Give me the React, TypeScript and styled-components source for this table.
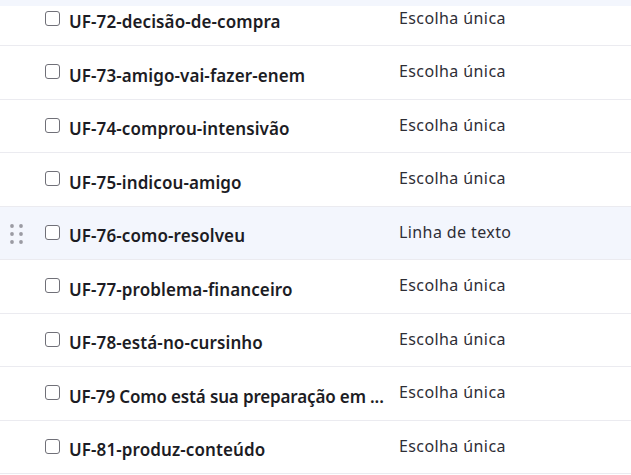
import React from "react";
import styled, { createGlobalStyle } from "styled-components";

const colors = {
  white: "#ffffff",
  hover: "#f3f6fd",
  border: "#ebebf0",
  text: "#1c1c24",
  muted: "#2e2e36",
  handle: "#9b9ba3",
  box: "#707078",
};

const fields = [
  { id: 72, name: "UF-72-decisão-de-compra", type: "Escolha única" },
  { id: 73, name: "UF-73-amigo-vai-fazer-enem", type: "Escolha única" },
  { id: 74, name: "UF-74-comprou-intensivão", type: "Escolha única" },
  { id: 75, name: "UF-75-indicou-amigo", type: "Escolha única" },
  { id: 76, name: "UF-76-como-resolveu", type: "Linha de texto", active: true },
  { id: 77, name: "UF-77-problema-financeiro", type: "Escolha única" },
  { id: 78, name: "UF-78-está-no-cursinho", type: "Escolha única" },
  { id: 79, name: "UF-79 Como está sua preparação em ...", type: "Escolha única", tight: true },
  { id: 81, name: "UF-81-produz-conteúdo", type: "Escolha única" },
];

const GlobalStyle = createGlobalStyle`
  html, body {
    margin: 0;
    padding: 0;
    background: ${colors.white};
  }
  body {
    font-family: "Noto Sans", "Open Sans", sans-serif;
    overflow: hidden;
  }
`;

const DragHandle = () => (
  <svg width="14" height="22" viewBox="0 0 14 22">
    {[0, 1, 2].map((r) =>
      [0, 1].map((c) => (
        <circle key={`${r}-${c}`} cx={3 + c * 9} cy={3 + r * 8} r="1.9" fill={colors.handle} />
      ))
    )}
  </svg>
);

const App = () => {
  return (
    <Page>
      <GlobalStyle />
      <StickyBar />
      <List>
        {fields.map((field) => (
          <Row key={field.id} $active={!!field.active}>
            <Handle>{field.active && <DragHandle />}</Handle>
            <Check type="checkbox" aria-label={field.name} />
            <Name title={field.name} $tight={!!field.tight}>
              {field.name}
            </Name>
            <Type>{field.type}</Type>
          </Row>
        ))}
      </List>
    </Page>
  );
};

const Page = styled.div`
  width: 631px;
  height: 475px;
  overflow: hidden;
  background: ${colors.white};
`;

const StickyBar = styled.div`
  position: sticky;
  top: 0;
  z-index: 2;
  height: 6px;
  background: ${colors.hover};
`;

const List = styled.div`
  margin-top: -13.5px;
  display: flex;
  flex-direction: column;
`;

const Row = styled.div<{ $active: boolean }>`
  box-sizing: border-box;
  height: 53.5px;
  flex-shrink: 0;
  display: grid;
  grid-template-columns: 45px 24px 330px 1fr;
  align-items: center;
  border-bottom: 1px solid ${colors.border};
  background-color: ${(p) => (p.$active ? colors.hover : colors.white)};
`;

const Handle = styled.div`
  display: flex;
  justify-content: flex-start;
  padding-left: 9px;
  padding-top: 2px;
`;

const Check = styled.input`
  appearance: none;
  margin: 0;
  width: 15px;
  height: 15px;
  box-sizing: border-box;
  border: 1.5px solid ${colors.box};
  border-radius: 3px;
  background: ${colors.white};
  margin-top: -1px;
`;

const Name = styled.span<{ $tight: boolean }>`
  font-size: 17px;
  font-weight: 600;
  letter-spacing: ${(p) => (p.$tight ? "-0.15px" : "0.1px")};
  color: ${colors.text};
  white-space: nowrap;
  padding-top: 6px;
  padding-right: 8px;
`;

const Type = styled.span`
  font-size: 16px;
  letter-spacing: 0.4px;
  color: ${colors.muted};
  white-space: nowrap;
  margin-top: -2px;
`;

export default App;
